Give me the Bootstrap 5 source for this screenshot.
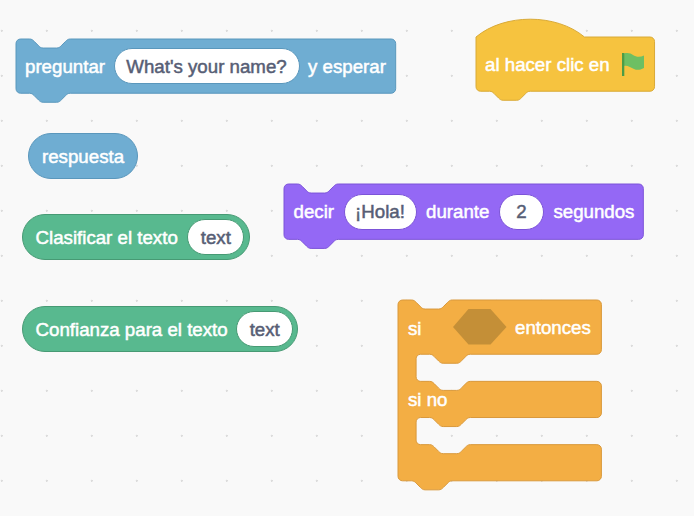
<!DOCTYPE html>
<html lang="es">
<head>
<meta charset="utf-8">
<title>Bloques</title>
<link href="https://cdn.jsdelivr.net/npm/bootstrap@5.3.0/dist/css/bootstrap.min.css" rel="stylesheet">
<style>
html,body{height:100%;margin:0}
body{background:#f9f9f9;overflow:hidden}
.workspace{width:694px;height:516px;background-color:#f9f9f9;background-image:radial-gradient(circle at 1.7px 1.7px,#dcdcdc 0,#dcdcdc .9px,transparent 1.3px);background-size:45px 45px;background-position:0 29px;font-family:"Liberation Sans",Arial,sans-serif;font-size:18.7px;color:#fff;-webkit-text-stroke:.5px #fff;line-height:1}
.blk{position:absolute}
.blk svg.shape{position:absolute;left:0;top:0;overflow:visible}
.inner{position:relative;height:100%;white-space:nowrap}
.inner>span{padding-top:2px}
.inner>.slot{height:36px;background:#fff;color:#575e75;-webkit-text-stroke:.5px #575e75;justify-content:center}
.shape path{stroke-width:.88}
.b-ask{left:16px;top:39px;width:380px;height:54px}
.b-ask .inner{padding-left:9px;gap:8.5px}
.b-ask .slot{width:186px;border:1px solid #5a97bc}
.b-resp{left:28px;top:133px;width:110px;height:45px}
.b-resp .inner{padding-left:14px}
.b-resp .inner>span{padding-top:4px}
.b-hat{left:476px;top:37px;width:179px;height:54px}
.b-hat .inner{padding-left:9px}
.b-say{left:284px;top:184px;width:360px;height:55px}
.b-say .inner{padding-left:9.5px;gap:9.5px}
.b-say .slot{border:1px solid #7c54d8}
.s-hola{width:73px}
.s-two{width:45px}
.b-class{left:22px;top:214px;width:228px;height:46px}
.b-conf{left:22px;top:306px;width:276px;height:46px}
.b-class .inner{padding-left:13.5px;gap:9.5px}
.b-conf .inner{padding-left:13.5px;gap:8.5px}
.b-class .slot,.b-conf .slot{width:57px;border:1px solid #479a74}
.b-if{left:398px;top:300px;width:203px;height:181px}
.t-si{position:absolute;left:10px;top:20px}
.t-ent{position:absolute;left:117px;top:19px}
.t-no{position:absolute;left:10px;top:91px}
.flag{position:absolute;left:146px;top:15px}
.hex{position:absolute;left:54.5px;top:9px}
</style>
</head>
<body>
<main class="workspace position-relative">

<div class="blk b-ask">
<svg class="shape" width="380" height="64"><g transform="scale(1.13)"><path fill="#6fadd2" stroke="#5a97bc" d="M0 4A4 4 0 0 1 4 0H12c2 0 3 1 4 2l4 4c1 1 2 2 4 2h12c2 0 3-1 4-2l4-4c1-1 2-2 4-2H332a4 4 0 0 1 4 4V44a4 4 0 0 1-4 4H48c-2 0-3 1-4 2l-4 4c-1 1-2 2-4 2H24c-2 0-3-1-4-2l-4-4c-1-1-2-2-4-2H4a4 4 0 0 1-4-4z"/></g></svg>
<div class="inner d-flex align-items-center"><span>preguntar</span><span class="slot d-flex align-items-center rounded-pill">What's your name?</span><span>y esperar</span></div>
</div>

<div class="blk b-resp">
<svg class="shape" width="110" height="46"><rect x=".5" y=".5" width="109" height="45" rx="22.5" fill="#6fadd2" stroke="#5a97bc"/></svg>
<div class="inner d-flex align-items-center"><span>respuesta</span></div>
</div>

<div class="blk b-hat">
<svg class="shape" width="179" height="64"><g transform="scale(1.13)"><path fill="#f6c33f" stroke="#d9a936" d="M0 0c25-21 71-21 96 0H154a4 4 0 0 1 4 4V44a4 4 0 0 1-4 4H48c-2 0-3 1-4 2l-4 4c-1 1-2 2-4 2H24c-2 0-3-1-4-2l-4-4c-1-1-2-2-4-2H4a4 4 0 0 1-4-4z"/></g></svg>
<div class="inner d-flex align-items-center"><span>al hacer clic en</span></div>
<svg class="flag" width="24" height="26" viewBox="0 0 24 26"><path fill="#6dbf63" d="M2 1.500C6 .5 9 1.500 11 3c3 2 7 2.500 11 .5V16c-4 2-7 2.500-10 1-3-1.500-7-4-10-3z"/><path fill="#4c9c46" d="M0 1h2.300v23H0z"/></svg>
</div>

<div class="blk b-say">
<svg class="shape" width="360" height="65"><g transform="scale(1.13)"><path fill="#9468f5" stroke="#7c54d8" d="M0 4A4 4 0 0 1 4 0H12c2 0 3 1 4 2l4 4c1 1 2 2 4 2h12c2 0 3-1 4-2l4-4c1-1 2-2 4-2H314a4 4 0 0 1 4 4V45a4 4 0 0 1-4 4H48c-2 0-3 1-4 2l-4 4c-1 1-2 2-4 2H24c-2 0-3-1-4-2l-4-4c-1-1-2-2-4-2H4a4 4 0 0 1-4-4z"/></g></svg>
<div class="inner d-flex align-items-center"><span>decir</span><span class="slot s-hola d-flex align-items-center rounded-pill">¡Hola!</span><span>durante</span><span class="slot s-two d-flex align-items-center rounded-pill">2</span><span>segundos</span></div>
</div>

<div class="blk b-class">
<svg class="shape" width="228" height="46"><rect x=".5" y=".5" width="227" height="45" rx="22.5" fill="#58b98f" stroke="#479a74"/></svg>
<div class="inner d-flex align-items-center"><span>Clasificar el texto</span><span class="slot d-flex align-items-center rounded-pill">text</span></div>
</div>

<div class="blk b-conf">
<svg class="shape" width="276" height="46"><rect x=".5" y=".5" width="275" height="45" rx="22.5" fill="#58b98f" stroke="#479a74"/></svg>
<div class="inner d-flex align-items-center"><span>Confianza para el texto</span><span class="slot d-flex align-items-center rounded-pill">text</span></div>
</div>

<div class="blk b-if">
<svg class="shape" width="203" height="191"><g transform="scale(1.13)"><path fill="#f3ae44" stroke="#d9983a" d="M0 4A4 4 0 0 1 4 0H12c2 0 3 1 4 2l4 4c1 1 2 2 4 2h12c2 0 3-1 4-2l4-4c1-1 2-2 4-2H176a4 4 0 0 1 4 4V44a4 4 0 0 1-4 4H64c-2 0-3 1-4 2l-4 4c-1 1-2 2-4 2H40c-2 0-3-1-4-2l-4-4c-1-1-2-2-4-2H20a4 4 0 0 0-4 4V68a4 4 0 0 0 4 4h8c2 0 3 1 4 2l4 4c1 1 2 2 4 2h12c2 0 3-1 4-2l4-4c1-1 2-2 4-2H176a4 4 0 0 1 4 4V100a4 4 0 0 1-4 4H64c-2 0-3 1-4 2l-4 4c-1 1-2 2-4 2H40c-2 0-3-1-4-2l-4-4c-1-1-2-2-4-2H20a4 4 0 0 0-4 4V124a4 4 0 0 0 4 4h8c2 0 3 1 4 2l4 4c1 1 2 2 4 2h12c2 0 3-1 4-2l4-4c1-1 2-2 4-2H176a4 4 0 0 1 4 4V156a4 4 0 0 1-4 4H48c-2 0-3 1-4 2l-4 4c-1 1-2 2-4 2H24c-2 0-3-1-4-2l-4-4c-1-1-2-2-4-2H4a4 4 0 0 1-4-4z"/></g></svg>
<span class="t-si">si</span>
<svg class="hex" width="54" height="36"><path fill="#c48f37" d="M0 18L15.500 0H37.500L53.500 18L37.500 35.500H15.500z"/></svg>
<span class="t-ent">entonces</span>
<span class="t-no">si no</span>
</div>

</main>
<script src="https://cdn.jsdelivr.net/npm/bootstrap@5.3.0/dist/js/bootstrap.bundle.min.js"></script>
</body>
</html>
